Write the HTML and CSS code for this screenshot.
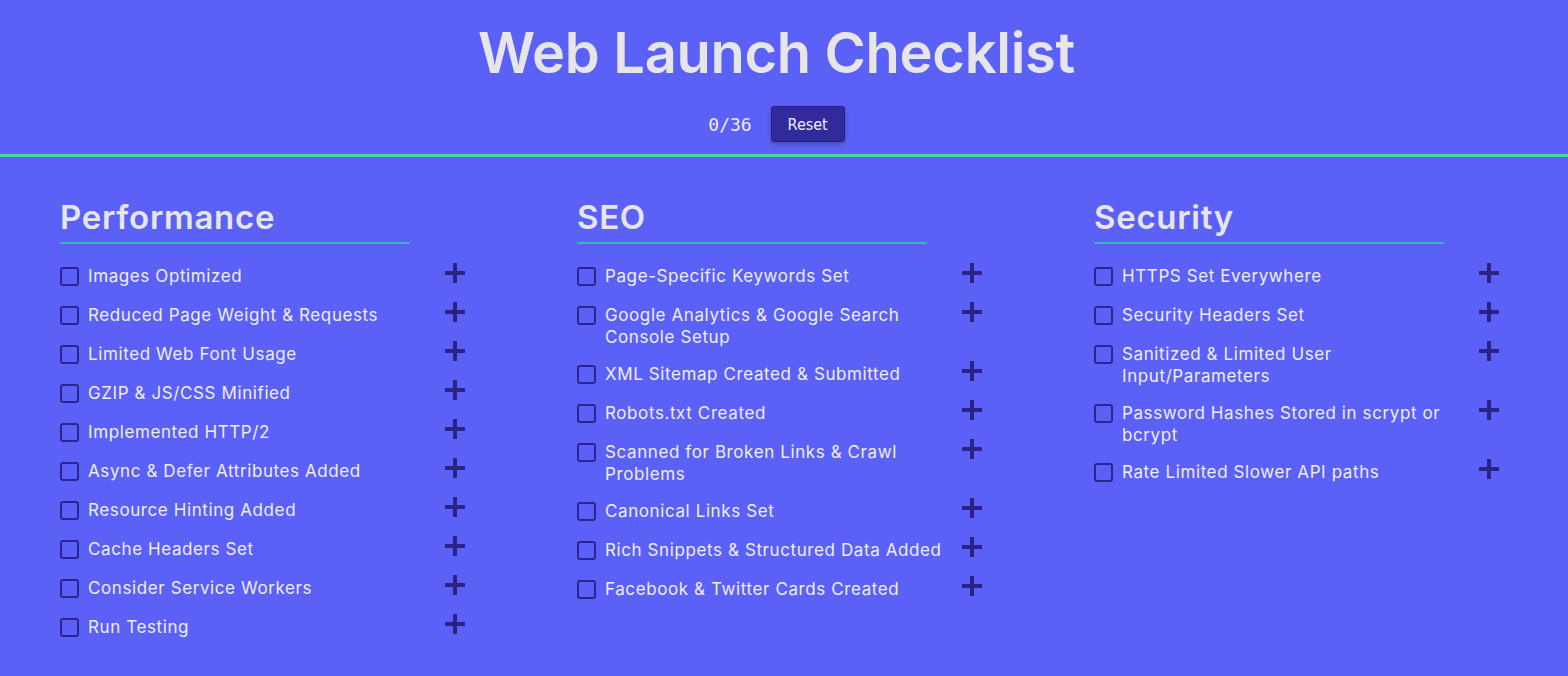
FILE: index.html
```html
<!DOCTYPE html>
<html lang="en">
<head>
  <meta charset="UTF-8">
  <title>Web Launch Checklist</title>
  <link rel="stylesheet" href="styles.css">
</head>
<body>

  <header class="top">
    <h1>Web Launch Checklist</h1>
    <div class="progress">
      <span class="count">0/36</span>
      <button class="reset">Reset</button>
    </div>
  </header>

  <main class="lists">
    <section class="group">
      <h2>Performance</h2>
      <ul>
        <li><span class="box"></span><span class="label">Images Optimized</span><span class="more"></span></li>
        <li><span class="box"></span><span class="label">Reduced Page Weight &amp; Requests</span><span class="more"></span></li>
        <li><span class="box"></span><span class="label">Limited Web Font Usage</span><span class="more"></span></li>
        <li><span class="box"></span><span class="label">GZIP &amp; JS/CSS Minified</span><span class="more"></span></li>
        <li><span class="box"></span><span class="label">Implemented HTTP/2</span><span class="more"></span></li>
        <li><span class="box"></span><span class="label">Async &amp; Defer Attributes Added</span><span class="more"></span></li>
        <li><span class="box"></span><span class="label">Resource Hinting Added</span><span class="more"></span></li>
        <li><span class="box"></span><span class="label">Cache Headers Set</span><span class="more"></span></li>
        <li><span class="box"></span><span class="label">Consider Service Workers</span><span class="more"></span></li>
        <li><span class="box"></span><span class="label">Run Testing</span><span class="more"></span></li>
      </ul>
    </section>

    <section class="group">
      <h2>SEO</h2>
      <ul>
        <li><span class="box"></span><span class="label">Page-Specific Keywords Set</span><span class="more"></span></li>
        <li><span class="box"></span><span class="label">Google Analytics &amp; Google Search Console Setup</span><span class="more"></span></li>
        <li><span class="box"></span><span class="label">XML Sitemap Created &amp; Submitted</span><span class="more"></span></li>
        <li><span class="box"></span><span class="label">Robots.txt Created</span><span class="more"></span></li>
        <li><span class="box"></span><span class="label">Scanned for Broken Links &amp; Crawl Problems</span><span class="more"></span></li>
        <li><span class="box"></span><span class="label">Canonical Links Set</span><span class="more"></span></li>
        <li><span class="box"></span><span class="label">Rich Snippets &amp; Structured Data Added</span><span class="more"></span></li>
        <li><span class="box"></span><span class="label">Facebook &amp; Twitter Cards Created</span><span class="more"></span></li>
      </ul>
    </section>

    <section class="group">
      <h2>Security</h2>
      <ul>
        <li><span class="box"></span><span class="label">HTTPS Set Everywhere</span><span class="more"></span></li>
        <li><span class="box"></span><span class="label">Security Headers Set</span><span class="more"></span></li>
        <li><span class="box"></span><span class="label">Sanitized &amp; Limited User Input/Parameters</span><span class="more"></span></li>
        <li><span class="box"></span><span class="label">Password Hashes Stored in scrypt or bcrypt</span><span class="more"></span></li>
        <li><span class="box"></span><span class="label">Rate Limited Slower API paths</span><span class="more"></span></li>
      </ul>
    </section>
  </main>

</body>
</html>
```

FILE: styles.css
```css
body {
  margin: 0;
  background-color: #5b61f6;
  font-family: Inter, 'Noto Sans', sans-serif;
  color: #eeeefa;
}
.top {
  text-align: center;
  border-bottom: 3px solid #4fd3a6;
  padding: 20px 15px 12px 0;
}
h1 {
  margin: 0;
  font-size: 56px;
  line-height: 66px;
  font-weight: 600;
  color: #e6e6ea;
  letter-spacing: -0.3px;
}
.progress {
  display: flex;
  justify-content: center;
  align-items: center;
  gap: 19px;
  margin-top: 20px;
}
.count {
  font-family: 'DejaVu Sans Mono', monospace;
  font-size: 18px;
  color: #ececf6;
}
.reset {
  background-color: #302a9c;
  color: #eeeefa;
  border: 1px solid #241f80;
  border-radius: 3px;
  box-shadow: 0 2px 4px rgba(0, 0, 0, 0.25);
  width: 74px;
  height: 36px;
  font-family: 'DejaVu Sans Condensed', 'DejaVu Sans', sans-serif;
  font-size: 16px;
  padding: 0;
}
.lists {
  display: grid;
  grid-template-columns: 405px 405px 405px;
  column-gap: 112px;
  padding: 40px 0 0 60px;
}
h2 {
  margin: 0;
  font-size: 33px;
  line-height: 40px;
  font-weight: 600;
  letter-spacing: 0.7px;
  color: #e6e6ea;
  width: 350px;
  padding-bottom: 5px;
  border-bottom: 2px solid #3bb3c4;
}
ul {
  list-style: none;
  margin: 0;
  padding: 21px 0 0;
}
li {
  display: flex;
  align-items: flex-start;
  min-height: 24px;
  font-size: 17px;
  line-height: 22px;
  letter-spacing: 0.6px;
  margin-bottom: 15px;
}
.box {
  flex: none;
  width: 15px;
  height: 15px;
  border: 2px solid #2a2590;
  border-radius: 3px;
  margin: 2px 9px 0 0;
}
.label {
  flex: 1;
  padding-right: 12px;
}
.more {
  flex: none;
  position: relative;
  width: 20px;
  height: 20px;
  margin-top: -2px;
}
.more::before,
.more::after {
  content: '';
  position: absolute;
  background-color: #2a2384;
}
.more::before {
  left: 0;
  top: 8px;
  width: 20px;
  height: 4px;
}
.more::after {
  left: 8px;
  top: 0;
  width: 4px;
  height: 20px;
}
```
